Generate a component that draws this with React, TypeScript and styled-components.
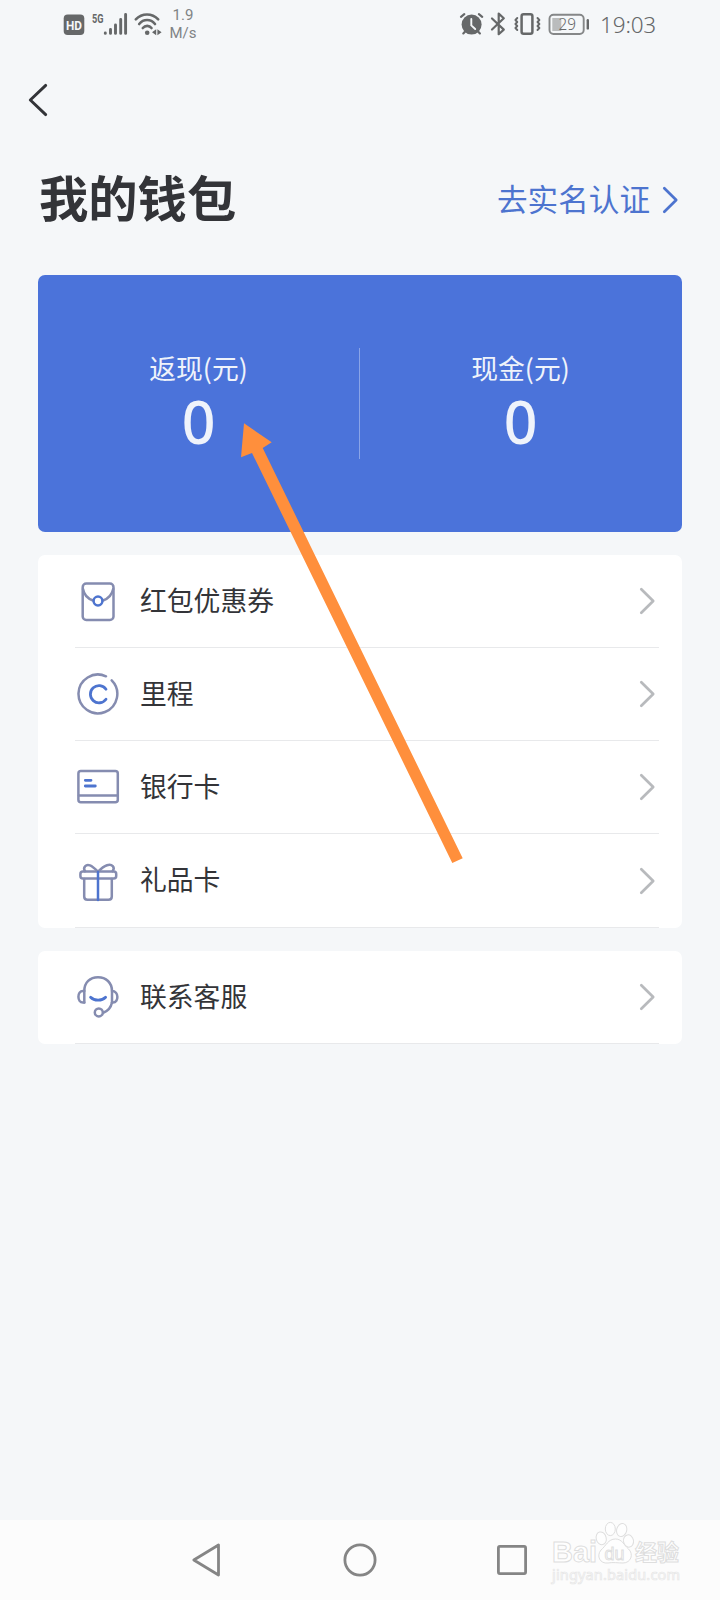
import React from "react";
import styled, { createGlobalStyle } from "styled-components";

const GlobalStyle = createGlobalStyle`
  * { box-sizing: border-box; }
  body { margin: 0; background: #f5f7f9; }
`;

const LINE = "#858cb0";
const BLUE = "#4d74cf";
const STATUS = "#666869";

const Screen = styled.div`
  position: relative;
  width: 720px;
  height: 1600px;
  display: flex;
  flex-direction: column;
  overflow: hidden;
  background: #f5f7f9;
  color: #333438;
  font-family: "Noto Sans CJK SC", sans-serif;
`;

const StatusBar = styled.header`
  height: 50px;
  display: flex;
  align-items: center;
  justify-content: space-between;
  padding: 0 64px 0 63px;
  color: ${STATUS};
`;

const StatusGroup = styled.div`
  display: flex;
  align-items: center;
  height: 50px;
`;

const Speed = styled.div`
  display: flex;
  flex-direction: column;
  align-items: center;
  width: 28px;
  margin-left: 4px;
  padding-bottom: 2px;
  font: 400 15px/18px Roboto, sans-serif;
  color: #808385;
`;

const Clock = styled.time`
  margin-left: 9px;
  font: 400 22.5px/30px "Noto Sans", sans-serif;
  font-weight: 300;
  letter-spacing: -0.2px;
`;

const BackBar = styled.nav`
  height: 100px;
  display: flex;
  align-items: center;
  padding-left: 28px;
`;

const BackButton = styled.button`
  display: flex;
  padding: 0;
  border: 0;
  background: none;
`;

const Heading = styled.div`
  height: 125px;
  display: flex;
  align-items: center;
  justify-content: space-between;
  padding: 0 41px 26px 39px;
`;

const Title = styled.h1`
  margin: 0;
  padding-bottom: 8px;
  font-size: 49.3px;
  line-height: 60px;
  font-weight: 700;
`;

const VerifyLink = styled.a`
  display: flex;
  align-items: center;
  gap: 12px;
  font-size: 30.6px;
  line-height: 40px;
  color: ${BLUE};
`;

const VerifyText = styled.span`
  padding-bottom: 4px;
`;

const Balance = styled.section`
  height: 257px;
  margin: 0 38px;
  display: grid;
  grid-template-columns: 321px 1px 321px;
  align-items: center;
  border-radius: 7px;
  background: #4b73da;
  color: #eff3fb;
`;

const Divider = styled.div`
  height: 111px;
  background: #8aa4e7;
`;

const Amount = styled.div`
  display: flex;
  flex-direction: column;
  align-items: center;
  padding-bottom: 1px;
`;

const AmountLabel = styled.span`
  font-size: 26.8px;
  line-height: 32px;
`;

const AmountValue = styled.strong`
  margin-top: 4px;
  font-family: "Noto Sans", sans-serif;
  font-size: 59px;
  line-height: 66px;
  font-weight: 500;
`;

const Card = styled.ul`
  list-style: none;
  margin: 23px 38px 0;
  padding: 0;
  border-radius: 7px;
  background: #fff;
`;

const Row = styled.li<{ $tall?: boolean }>`
  height: ${(p) => (p.$tall ? 94 : 93)}px;
  margin: 0 23px 0 37px;
  padding-right: 3px;
  display: flex;
  align-items: center;
  border-bottom: 1px solid #e8e9eb;
`;

const RowLabel = styled.span`
  flex: 1;
  margin-left: 19px;
  font-size: 26.8px;
  line-height: 36px;
  padding-bottom: 3px;
`;

const SystemNav = styled.footer`
  position: relative;
  height: 80px;
  margin-top: auto;
  display: flex;
  align-items: center;
  justify-content: center;
  gap: 116px;
  padding-right: 2px;
  background: #fcfcfc;
`;

const Pointer = styled.svg`
  position: absolute;
  left: 236px;
  top: 418px;
`;

const Watermark = styled.svg`
  position: absolute;
  left: 546px;
  top: 0;
`;

function Chevron({ color, width = 2.7 }: { color: string; width?: number }) {
  return (
    <svg width="17" height="30" viewBox="0 0 17 30" fill="none" stroke={color} strokeWidth={width} strokeLinecap="round" strokeLinejoin="round">
      <path d="M2.3 3.2 L14.2 15 L2.3 26.8" />
    </svg>
  );
}

function RowIcon({ children }: { children: React.ReactNode }) {
  return (
    <svg width="46" height="46" viewBox="0 0 46 46" fill="none" stroke={LINE} strokeWidth="2.5" strokeLinecap="round" strokeLinejoin="round">
      {children}
    </svg>
  );
}

const EnvelopeIcon = () => (
  <RowIcon>
    <rect x="7.7" y="5.6" width="30.8" height="36.4" rx="3.6" />
    <path d="M8 11 C9 17 12.5 20.5 18 22.5 M38.2 11 C37 17 33.5 20.5 28 22.5" />
    <circle cx="23" cy="23" r="4.4" stroke={BLUE} />
  </RowIcon>
);

const MileageIcon = () => (
  <RowIcon>
    <path d="M36.7 9.3 A19.4 19.4 0 1 1 31 5.3" />
    <path d="M31 18.2 A8.6 8.6 0 1 0 31 28.2" stroke={BLUE} strokeWidth="2.8" />
  </RowIcon>
);

const BankCardIcon = () => (
  <RowIcon>
    <rect x="3.4" y="7.1" width="39.4" height="31.1" rx="2.5" />
    <path d="M4 31.5 H42" />
    <path d="M10.3 16.3 H16 M10.3 22 H20.3" stroke={BLUE} strokeWidth="2.8" />
  </RowIcon>
);

const GiftIcon = () => (
  <RowIcon>
    <rect x="5.4" y="13.6" width="35.8" height="6.9" rx="2.5" />
    <path d="M9.2 21 V38.5 Q9.2 41.8 12.5 41.8 H33.5 Q36.8 41.8 36.8 38.5 V21" />
    <path d="M10 13.2 C7.5 9.4 11 5.9 15 7.4 C18 8.6 20.5 11.2 23 13.7 C25.5 11.2 28 8.6 32 7.2 C37 5.5 40.5 9.4 37.6 13.2" />
    <path d="M23 14 V42" stroke={BLUE} />
  </RowIcon>
);

const ServiceIcon = () => (
  <RowIcon>
    <path d="M9.3 28.5 V17 C9.3 8.7 15 3.2 23 3.2 S37 8.7 37 17 V28.5" />
    <path d="M9.3 17 H8 C1.9 17 1.9 28.5 8 28.5 H9.3 M37 17 C44 17 44 28.5 38 28.5 H37" />
    <path d="M37 28.5 C35.8 34 33 37 28.3 38.7" />
    <circle cx="23.8" cy="38.4" r="4" />
    <path d="M15.6 23.2 C19.2 27.1 27 27.1 30.6 23.2" stroke={BLUE} strokeWidth="2.8" />
  </RowIcon>
);

const NetworkIcons = () => (
  <svg width="102" height="50" viewBox="63 0 102 50" fill={STATUS}>
    <rect x="63.7" y="14.5" width="20.6" height="20.5" rx="4" />
    <text x="74" y="30" textAnchor="middle" fill="#f5f7f9" fontFamily="Roboto, sans-serif" fontWeight="700" fontSize="13.5" textLength="16" lengthAdjust="spacingAndGlyphs">HD</text>
    <text x="92" y="22.7" fontFamily="Roboto, sans-serif" fontWeight="700" fontSize="13" textLength="11.5" lengthAdjust="spacingAndGlyphs">5G</text>
    <g stroke={STATUS} strokeWidth="2.9" strokeLinecap="round" fill="none">
      <path d="M105.3 33 V33.4 M110.5 29.5 V33.4 M115.5 25 V33.4 M120.7 19.5 V33.4 M125.6 14.5 V33.4" />
      <path d="M135.8 19.4 C142 12.8 152 12.8 158.2 19.4 M139.2 24 C143.5 18.7 150.7 18.7 155 24 M142.8 28 C145.2 25.2 149.2 25.2 151.5 28" strokeWidth="2.6" />
    </g>
    <circle cx="147.2" cy="32.7" r="2.3" />
    <path d="M156.2 29.2 V35.2 L152 32.2 Z M157.4 29.2 V35.2 L161.6 32.2 Z" />
  </svg>
);

const DeviceIcons = () => (
  <svg width="134" height="50" viewBox="457 0 134 50" fill="none" stroke={STATUS} strokeWidth="2.2" strokeLinecap="round" strokeLinejoin="round">
    <circle cx="471.6" cy="24.6" r="10" fill={STATUS} stroke="none" />
    <path d="M461 16.8 L464.3 14.2 M482.2 16.8 L478.9 14.2 M463.3 33.4 L465.6 31 M479.9 33.4 L477.6 31" />
    <path d="M471.3 19 V25.4 L475.2 29" stroke="#f5f7f9" strokeWidth="1.9" />
    <path d="M492 18.5 L503.8 29.6 L498.7 34.2 V13.6 L503.8 18.2 L492 29.5" />
    <rect x="521.6" y="14.3" width="10.8" height="19.4" rx="2" strokeWidth="2.5" />
    <path d="M517.3 18 L515.4 20 L517.3 22 L515.4 24 L517.3 26 L515.4 28 L517.3 30 M537.5 18 L539.4 20 L537.5 22 L539.4 24 L537.5 26 L539.4 28 L537.5 30" strokeWidth="1.9" />
    <rect x="552.3" y="18" width="9" height="13" fill="#babcbd" stroke="none" />
    <rect x="549.5" y="14.8" width="34.2" height="19.2" rx="4" stroke="#858788" strokeWidth="1.9" />
    <path d="M587.8 20.3 V28.4" strokeWidth="2.4" />
    <text x="567.3" y="30.3" textAnchor="middle" fill={STATUS} stroke="none" fontFamily="Noto Sans, sans-serif" fontWeight="300" fontSize="16.5" textLength="17.5" lengthAdjust="spacingAndGlyphs">29</text>
  </svg>
);

const MENU = [
  { label: "红包优惠券", Icon: EnvelopeIcon },
  { label: "里程", Icon: MileageIcon },
  { label: "银行卡", Icon: BankCardIcon },
  { label: "礼品卡", Icon: GiftIcon, tall: true },
];

function MenuRow({ label, Icon, tall }: { label: string; Icon: React.ComponentType; tall?: boolean }) {
  return (
    <Row $tall={tall}>
      <Icon />
      <RowLabel>{label}</RowLabel>
      <Chevron color="#b8babd" />
    </Row>
  );
}

export default function App() {
  return (
    <Screen>
      <GlobalStyle />
      <StatusBar>
        <StatusGroup>
          <NetworkIcons />
          <Speed>
            <span>1.9</span>
            <span>M/s</span>
          </Speed>
        </StatusGroup>
        <StatusGroup>
          <DeviceIcons />
          <Clock>19:03</Clock>
        </StatusGroup>
      </StatusBar>

      <BackBar>
        <BackButton aria-label="返回">
          <svg width="20" height="36" viewBox="0 0 20 36" fill="none" stroke="#333438" strokeWidth="2.9" strokeLinecap="round" strokeLinejoin="round">
            <path d="M17.7 3.4 L2.3 18 L17.7 32.6" />
          </svg>
        </BackButton>
      </BackBar>

      <Heading>
        <Title>我的钱包</Title>
        <VerifyLink>
          <VerifyText>去实名认证</VerifyText>
          <Chevron color={BLUE} />
        </VerifyLink>
      </Heading>

      <Balance>
        <Amount>
          <AmountLabel>返现(元)</AmountLabel>
          <AmountValue>0</AmountValue>
        </Amount>
        <Divider />
        <Amount>
          <AmountLabel>现金(元)</AmountLabel>
          <AmountValue>0</AmountValue>
        </Amount>
      </Balance>

      <Card>
        {MENU.map((item) => (
          <MenuRow key={item.label} {...item} />
        ))}
      </Card>
      <Card>
        <MenuRow label="联系客服" Icon={ServiceIcon} />
      </Card>

      <SystemNav>
        <svg width="38" height="38" viewBox="0 0 38 38" fill="none" stroke="#858585" strokeWidth="2.8" strokeLinejoin="round">
          <path d="M32.5 4 V34 L7.8 19 Z" />
        </svg>
        <svg width="38" height="38" viewBox="0 0 38 38" fill="none" stroke="#858585" strokeWidth="2.8">
          <circle cx="20" cy="19" r="15.1" />
        </svg>
        <svg width="38" height="38" viewBox="0 0 38 38" fill="none" stroke="#858585" strokeWidth="2.8">
          <rect x="4.4" y="5.4" width="27.2" height="27.2" rx="1.5" />
        </svg>
        <Watermark width="140" height="80" viewBox="546 1520 140 80" fill="#fefefe" stroke="#dedede" strokeWidth="1">
          <g fontFamily="Liberation Sans, Noto Sans CJK SC, sans-serif" fontWeight="700">
            <text x="552" y="1562.3" fontSize="30" textLength="45" lengthAdjust="spacingAndGlyphs">Bai</text>
            <path d="M615.5 1539 C622 1539 624 1545 628.5 1549 C634 1554 631 1563 623 1563 C618 1563 613 1562 608 1563 C600 1564 596 1556 601 1550 C606 1546 608 1539 615.5 1539 Z" />
            <ellipse cx="601.2" cy="1538.3" rx="5" ry="6.5" transform="rotate(-15 601.2 1538.3)" />
            <ellipse cx="610.3" cy="1529" rx="5" ry="6.6" />
            <ellipse cx="621.7" cy="1530" rx="5" ry="6.6" transform="rotate(15 621.7 1530)" />
            <ellipse cx="628.5" cy="1541" rx="5" ry="6.2" transform="rotate(-10 628.5 1541)" />
            <text x="604.5" y="1560" fontSize="19" fontWeight="400" textLength="20" lengthAdjust="spacingAndGlyphs">du</text>
            <text x="635" y="1560" fontFamily="Noto Sans CJK SC, sans-serif" fontSize="22" textLength="44">经验</text>
            <text x="552" y="1579.5" fontFamily="Noto Sans, sans-serif" fontWeight="400" fontSize="14.5" strokeWidth="0.7" stroke="#e6e6e6" textLength="128">jingyan.baidu.com</text>
          </g>
        </Watermark>
      </SystemNav>

      <Pointer width="232" height="450" viewBox="236 418 232 450" fill="#ff8f3c">
        <path d="M244 423.3 L271.7 442.3 L262.7 448 L462.7 858.3 L452.3 862.9 L252 453 L241 457.3 Z" />
      </Pointer>
    </Screen>
  );
}
